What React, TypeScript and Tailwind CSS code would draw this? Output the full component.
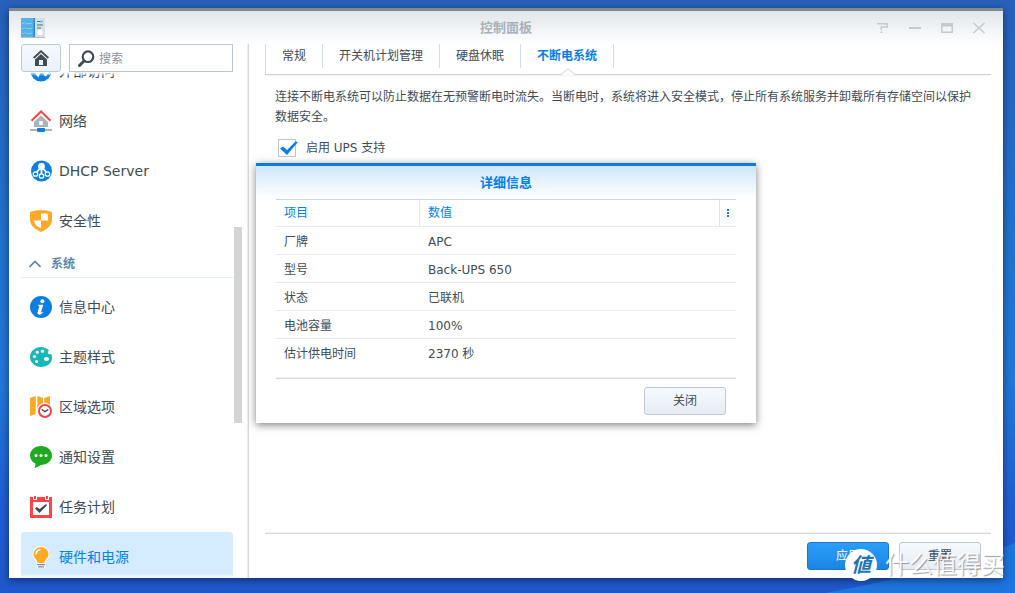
import type { ReactNode } from "react";
import clsx from "clsx";

const tabs = ["常规", "开关机计划管理", "硬盘休眠", "不断电系统"];

const details = [
  { label: "厂牌", value: "APC" },
  { label: "型号", value: "Back-UPS 650" },
  { label: "状态", value: "已联机" },
  { label: "电池容量", value: "100%" },
  { label: "估计供电时间", value: "2370 秒" },
];

function Icon({ children }: { children: ReactNode }) {
  return (
    <svg viewBox="0 0 22 22" className="h-[22px] w-[22px] shrink-0" aria-hidden="true">
      {children}
    </svg>
  );
}

const GlobeIcon = () => (
  <Icon>
    <circle cx="11" cy="11" r="10.5" fill="#0c7fe0" />
    <path d="M2 6l5-3 4 2v6l-1 3-1.500 3.500L6 15l-1-2.500-3-2zM13 11l4-5 3 3-.5 6-1.500-1.500-2 3-2-1z" fill="#fff" />
  </Icon>
);

const NetworkIcon = () => (
  <Icon>
    <path d="M11 5.2L4 12v5h14v-5z" fill="#a9b4bf" />
    <path d="M9.2 11h3.6v4H9.2z" fill="#fff" />
    <path d="M1.500 10.800L11 1.500l9.500 9.300" fill="none" stroke="#fa4646" strokeWidth="2" />
    <path d="M0 19h22v2H0z" fill="#a9b4bf" />
    <rect x="7" y="18" width="8" height="4" rx="1" fill="#0c7fe0" />
  </Icon>
);

const DhcpIcon = () => (
  <Icon>
    <circle cx="11.500" cy="11" r="10.500" fill="#0c7fe0" />
    <circle cx="11.500" cy="6.500" r="3.400" fill="#fff" />
    <path d="M10 8.500L6 13M11.500 9v5.500M13 8.500L17 13" stroke="#fff" strokeWidth="1.800" />
    <g fill="#0c7fe0" stroke="#fff" strokeWidth="1.300">
      <circle cx="5.500" cy="14" r="2.200" />
      <circle cx="11.500" cy="16" r="2.200" />
      <circle cx="17.500" cy="14" r="2.200" />
    </g>
  </Icon>
);

const ShieldIcon = () => (
  <Icon>
    <path d="M0 2Q11-2 22 2v8c0 6-6 9.500-11 12C6 19.500 0 16 0 10z" fill="#ffa928" />
    <path d="M11 3.500h5.500q1.500 0 1.500 1.500v5.500h-7zM4 10.500h7V18c-4-1.500-7-4-7-7.500z" fill="#fff" />
  </Icon>
);

const InfoIcon = () => (
  <Icon>
    <circle cx="11" cy="11" r="11" fill="#0c7fe0" />
    <circle cx="12.400" cy="5.200" r="2" fill="#fff" />
    <path
      d="M8.200 8.700h5l-2.100 7.200c-.2.900.5.900 1.700-.2l.5.600c-1.600 2-3 2.600-4.300 2.400-1.500-.2-1.700-1.200-1.400-2.400l1.700-6.300-1.400-.4z"
      fill="#fff"
    />
  </Icon>
);

const PaletteIcon = () => (
  <Icon>
    <path
      d="M11 1C5 1 0 5.400 0 11s5 10 11 10 11-3.500 11-9.500c0-1-.2-2.500-.7-3.500-2 .8-4-.2-3.300-2 .3-.8 1-1.500 1-1.500C17 2.300 14 1 11 1z"
      fill="#17b8b8"
    />
    <g fill="#fff">
      <circle cx="12.500" cy="5.200" r="1.600" />
      <circle cx="7.300" cy="6.200" r="1.600" />
      <circle cx="4.500" cy="10.500" r="1.600" />
      <circle cx="6.500" cy="15.500" r="1.600" />
      <ellipse cx="16.500" cy="13" rx="2.600" ry="2.100" />
    </g>
  </Icon>
);

const RegionIcon = () => (
  <Icon>
    <path d="M0 2l5.700-2v18L0 20zM7.300 0L13 2v16l-5.700-1zM14.300 2L20 0v12h-5.700z" fill="#ffa928" />
    <circle cx="15" cy="15" r="8" fill="#fff" />
    <circle cx="15" cy="15" r="6" fill="#fff" stroke="#f5424a" strokeWidth="2" />
    <path d="M11.700 13.500l3.300 2.200 3.300-2.200" fill="none" stroke="#414b55" strokeWidth="1.500" />
  </Icon>
);

const NotificationIcon = () => (
  <Icon>
    <path
      d="M11 0C5 0 0 4 0 9.500c0 3.600 2.200 6.600 5.500 8.200 0 1.500-.3 3-1 4.300 2.500-.6 4.500-1.600 6-3 6.500 0 11.500-4 11.500-9.500S17 0 11 0z"
      fill="#1faa1f"
    />
    <circle cx="6" cy="9.500" r="1.500" fill="#fff" />
    <circle cx="11" cy="9.500" r="1.500" fill="#fff" />
    <circle cx="16" cy="9.500" r="1.500" fill="#fff" />
  </Icon>
);

const TaskIcon = () => (
  <Icon>
    <path d="M0 1h22v21H0z" fill="#fa4646" />
    <path d="M3 6h16v13H3z" fill="#fff" />
    <path d="M3 0h4v4H3zM15 0h4v4h-4z" fill="#fff" />
    <path d="M4 0h2v3H4zM16 0h2v3h-2z" fill="#fa4646" />
    <path d="M5 12.500l1.700-1.500 3 2L16 8l1 1.200L9.500 17z" fill="#414b55" />
  </Icon>
);

const BulbIcon = () => (
  <Icon>
    <path
      d="M11 0a8.500 8.500 0 0 0-8.500 8.500c0 3.500 3 5.300 4.200 7.500v5q0 1 1 1h6.600q1 0 1-1v-5c1.200-2.200 4.200-4 4.200-7.500A8.500 8.500 0 0 0 11 0z"
      fill="#fff"
    />
    <path
      d="M11 1a7.500 7.500 0 0 0-7.500 7.500c0 3.500 3.500 4.500 4.200 8.500h6.600c.7-4 4.200-5 4.200-8.500A7.500 7.500 0 0 0 11 1z"
      fill="#ffa928"
    />
    <path d="M6 8.500Q6.200 4.200 10.500 3.500" fill="none" stroke="#fff" strokeWidth="1.600" />
    <path d="M7 18h8v1.200H7zM8 20.300h6v1.200H8z" fill="#7d8891" />
  </Icon>
);

const connectivity = [
  { label: "外部访问", icon: GlobeIcon },
  { label: "网络", icon: NetworkIcon },
  { label: "DHCP Server", icon: DhcpIcon },
  { label: "安全性", icon: ShieldIcon },
];

const system = [
  { label: "信息中心", icon: InfoIcon },
  { label: "主题样式", icon: PaletteIcon },
  { label: "区域选项", icon: RegionIcon },
  { label: "通知设置", icon: NotificationIcon },
  { label: "任务计划", icon: TaskIcon },
  { label: "硬件和电源", icon: BulbIcon, active: true },
];

type NavItem = { label: string; icon: () => ReactNode; active?: boolean };

function NavRow({ label, icon: ItemIcon, active }: NavItem) {
  return (
    <li>
      <a
        href="#"
        className={clsx(
          "flex h-[50px] items-center gap-[7px] rounded-sm pl-[9px] text-sm",
          active ? "bg-[#d5ebff] text-[#057feb]" : "text-[#414b55]"
        )}
      >
        <ItemIcon />
        <span>{label}</span>
      </a>
    </li>
  );
}

function Button({ children, primary }: { children: ReactNode; primary?: boolean }) {
  return (
    <button
      type="button"
      className={clsx(
        "h-7 w-[82px] rounded-[3px] border text-xs",
        primary
          ? "border-[#1a78c8] bg-linear-to-b from-[#2c9dfa] to-[#1b86e4] text-white"
          : "border-[#bcc8d4] bg-linear-to-b from-[#f5faff] to-[#e6ecf2] text-[#414b55]"
      )}
    >
      {children}
    </button>
  );
}

function TitleBar() {
  return (
    <header className="grid h-[33px] shrink-0 grid-cols-[1fr_auto_1fr] items-center bg-linear-to-b from-[#e1e6eb] to-white">
      <svg viewBox="0 0 24 20" className="ml-3 h-5 w-6" aria-hidden="true">
        <path d="M0 18h24v2H0z" fill="#b7bec4" />
        <path d="M0 0h14v19H0z" fill="#56b1e8" />
        <path d="M12.500 0H14v19h-1.500z" fill="#2f86d2" />
        <path d="M14 0h10v19H14z" fill="#d9dfe4" />
        <path d="M1 5l1 1 2-2M5 5.500h6M1 10l1 1 2-2M5 10.500h6M1 15l1 1 2-2M5 15.500h6" fill="none" stroke="#82cbf2" />
        <path d="M16 3.500h6M16 7h6M16 10h4" stroke="#5d6b78" strokeWidth="1.200" />
        <path d="M19 3.500h3M16 7h3" stroke="#3fc6e8" strokeWidth="1.500" />
        <path d="M16 10h3" stroke="#74d24a" strokeWidth="1.500" />
        <circle cx="19" cy="14.500" r="2.700" fill="#fff" />
      </svg>
      <h1 className="text-[13px] font-bold text-[#a9b2bb]">控制面板</h1>
      <div className="mr-2 flex justify-end">
        <button type="button" aria-label="帮助" className="flex h-6 w-8 items-center justify-center">
          <svg viewBox="0 0 12 12" className="h-3 w-3" fill="none" stroke="#c5cace" strokeWidth="1.500">
            <path d="M0 1.700h10.300v3.200H4.300v3M3.500 10.300h2" />
          </svg>
        </button>
        <button type="button" aria-label="最小化" className="flex h-6 w-8 items-center justify-center">
          <svg viewBox="0 0 12 12" className="h-3 w-3">
            <path d="M0 5h12v2H0z" fill="#c5cace" />
          </svg>
        </button>
        <button type="button" aria-label="最大化" className="flex h-6 w-8 items-center justify-center">
          <svg viewBox="0 0 12 12" className="h-3 w-3">
            <path d="M0 1h12v10H0zM1.500 4.500v5h9v-5z" fill="#c5cace" fillRule="evenodd" />
          </svg>
        </button>
        <button type="button" aria-label="关闭窗口" className="flex h-6 w-8 items-center justify-center">
          <svg viewBox="0 0 12 12" className="h-3 w-3" stroke="#c5cace" strokeWidth="1.500">
            <path d="M.5 1l11 10M11.500 1L.5 11" />
          </svg>
        </button>
      </div>
    </header>
  );
}

function Sidebar() {
  return (
    <aside className="flex w-60 shrink-0 flex-col border-r border-[#d6d8da] pl-3 shadow-[inset_-2px_0_1px_-1px_rgba(0,0,0,0.08)]">
      <div className="flex shrink-0 gap-2 pr-[15px]">
        <button
          type="button"
          aria-label="主页"
          className="flex h-7 w-10 items-center justify-center rounded-[3px] border border-[#bcc8d4] bg-linear-to-b from-[#f5faff] to-[#ebf1f7]"
        >
          <svg viewBox="0 0 16 16" className="h-4 w-4" fill="#414b55">
            <path d="M8 0l8 7.300-1.300 1.400L8 2.600 1.300 8.700 0 7.300z" />
            <path d="M8 4l6 5.500V16H2V9.500zM6 10v5h4v-5z" fillRule="evenodd" />
          </svg>
        </button>
        <label className="flex h-7 min-w-0 flex-1 items-center gap-1 border border-[#b9c6d2] pl-2">
          <svg viewBox="0 0 17 17" className="h-[17px] w-[17px] shrink-0" fill="none" stroke="#414b55">
            <circle cx="10" cy="6.700" r="5.300" strokeWidth="2.200" />
            <path d="M6 11l-4.500 4.500" strokeWidth="3" strokeLinecap="round" />
          </svg>
          <input
            type="text"
            aria-label="搜索"
            placeholder="搜索"
            className="w-full min-w-0 pt-0.5 text-xs outline-none placeholder:text-[#8a949e]"
          />
        </label>
      </div>
      <div className="flex min-h-0 flex-1 gap-px">
        <nav className="relative min-w-0 flex-1 overflow-hidden">
          <div className="-mt-[26px]">
            <ul>
              {connectivity.map((item) => (
                <NavRow key={item.label} {...item} />
              ))}
            </ul>
            <button
              type="button"
              className="mb-1 flex h-8 w-full items-center gap-[10px] border-b border-[#e1eaf3] pt-1 pl-2 text-xs font-bold text-[#5a87a8]"
            >
              <svg viewBox="0 0 12 8" className="h-2 w-3" fill="none" stroke="#5a87a8" strokeWidth="1.600">
                <path d="M.5 7L6 1.500 11.500 7" />
              </svg>
              系统
            </button>
            <ul>
              {system.map((item) => (
                <NavRow key={item.label} {...item} />
              ))}
            </ul>
          </div>
          <div className="absolute inset-x-0 top-0 h-1 bg-linear-to-b from-white to-transparent" />
          <div className="absolute inset-x-0 bottom-0 h-1 bg-linear-to-t from-white to-transparent" />
        </nav>
        <div className="mr-[6px] w-2 shrink-0 pt-[155px]">
          <div className="h-[196px] bg-[#d3d4d6]" />
        </div>
      </div>
    </aside>
  );
}

function Tabs() {
  return (
    <nav className="border-b border-[#cfd1d3] shadow-[0_2px_2px_-1px_rgba(0,0,0,0.06)]">
      <ul className="flex border-l border-[#d3dde6]">
        {tabs.map((tab) => {
          const active = tab === "不断电系统";
          return (
            <li key={tab} className="relative pb-[6px]">
              <a
                href="#"
                className={clsx(
                  "block h-6 border-r border-[#d3dde6] px-4 text-xs leading-6",
                  active ? "font-bold text-[#057feb]" : "text-[#414b55]"
                )}
              >
                {tab}
              </a>
              {active && (
                <svg viewBox="0 0 14 8" className="absolute -bottom-px left-1/2 h-2 w-[14px] -translate-x-1/2">
                  <path d="M0 8l7-6.500L14 8z" fill="#fff" />
                  <path d="M.5 7.500L7 1.500l6.500 6" fill="none" stroke="#cfd1d3" />
                </svg>
              )}
            </li>
          );
        })}
      </ul>
    </nav>
  );
}

function UpsPanel() {
  return (
    <main className="flex min-w-0 flex-1 flex-col pr-3 pl-4">
      <Tabs />
      <div className="flex-1 px-[10px] pt-3 text-xs leading-5 text-[#414b55]">
        <p>
          连接不断电系统可以防止数据在无预警断电时流失。当断电时，系统将进入安全模式，停止所有系统服务并卸载所有存储空间以保护数据安全。
        </p>
        <label className="mt-3 ml-[3px] flex h-[18px] items-center gap-[10px]">
          <span className="relative h-[18px] w-[18px]">
            <input
              type="checkbox"
              defaultChecked
              className="peer block h-[18px] w-[18px] appearance-none border border-[#b9c6d2] bg-white"
            />
            <svg
              viewBox="0 0 20 18"
              className="pointer-events-none absolute top-0 left-0 hidden h-[18px] w-5 peer-checked:block"
            >
              <path d="M2 9.500L5 7.500l4 3.500L17.500 2.500 20 3 9 16z" fill="#0c7fe6" />
            </svg>
          </span>
          启用 UPS 支持
        </label>
      </div>
      <footer className="flex justify-end gap-[10px] border-t border-[#d6d8da] pt-2 pr-[10px] pb-2 shadow-[0_-1px_0_#f2f2f2]">
        <Button primary>应用</Button>
        <Button>重置</Button>
      </footer>
    </main>
  );
}

function DetailsDialog() {
  return (
    <section
      role="dialog"
      aria-labelledby="details-title"
      className="w-[500px] border-t-[3px] border-[#0a7be0] bg-white px-5 shadow-[0_2px_8px_rgba(0,0,0,0.5)]"
    >
      <h2
        id="details-title"
        className="-mx-5 h-[33px] bg-linear-to-b from-[#d0e8fa] to-white text-center text-[13px] leading-[34px] font-bold text-[#057feb]"
      >
        详细信息
      </h2>
      <table className="w-full table-fixed border-separate border-spacing-0 text-left text-xs text-[#414b55]">
        <colgroup>
          <col className="w-36" />
          <col />
          <col className="w-4" />
        </colgroup>
        <thead>
          <tr className="h-7 text-[#057feb]">
            <th className="border-y border-r border-t-[#c8d7e5] border-r-[#dde6ee] border-b-[#e6ebf0] p-0 pl-2 font-normal">
              项目
            </th>
            <th className="border-y border-r border-t-[#c8d7e5] border-r-[#dde6ee] border-b-[#e6ebf0] p-0 pl-2 font-normal">
              数值
            </th>
            <th className="border-y border-t-[#c8d7e5] border-b-[#e6ebf0] p-0">
              <button type="button" aria-label="列" className="flex w-full justify-center">
                <svg viewBox="0 0 2 8" className="h-2 w-[2px]" fill="#057feb">
                  <path d="M0 0h2v2H0zM0 3h2v2H0zM0 6h2v2H0z" />
                </svg>
              </button>
            </th>
          </tr>
        </thead>
        <tbody>
          {details.map((row, index) => {
            const line = index < details.length - 1 && "border-b border-[#e6ebf2]";
            return (
              <tr key={row.label} className="h-7">
                <td className={clsx("p-0 pt-0.5 pl-2", line)}>{row.label}</td>
                <td colSpan={2} className={clsx("p-0 pt-0.5 pl-2", line)}>
                  {row.value}
                </td>
              </tr>
            );
          })}
        </tbody>
      </table>
      <div className="mt-[11px] flex justify-end border-t border-[#d6d8da] pt-2 pr-[10px] pb-2 shadow-[0_-1px_0_#f2f2f2]">
        <Button>关闭</Button>
      </div>
    </section>
  );
}

function Watermark() {
  return (
    <div className="pointer-events-none absolute right-[10px] bottom-3 flex h-8 items-center gap-2">
      <span className="flex h-8 w-8 items-center justify-center rounded-full bg-white text-xl font-bold text-[#1f74b8] italic">
        値
      </span>
      <span className="text-2xl text-white/90 [text-shadow:1px_1px_1px_rgba(90,95,105,0.6)]">什么值得买</span>
    </div>
  );
}

export default function App() {
  return (
    <div
      lang="zh-CN"
      className="relative flex h-screen flex-col overflow-hidden bg-[#2160d3] bg-[linear-gradient(180deg,#2860bb_0%,#2272cf_40%,#2277da_65%,#215dd3_85%,#1f58cc_100%)] pt-2 pr-3 pb-[15px] pl-[9px] font-['DejaVu_Sans','Noto_Sans_CJK_SC',sans-serif]"
    >
      <svg
        viewBox="0 0 300 60"
        preserveAspectRatio="none"
        className="absolute right-0 bottom-0 h-[60px] w-[300px]"
        aria-hidden="true"
      >
        <path d="M110 60Q230 38 300 10v50z" fill="#1f74e0" />
      </svg>
      <div className="relative flex min-h-0 flex-1 flex-col border-t-[3px] border-[#808890] bg-white shadow-[0_2px_8px_rgba(0,0,0,0.5)]">
        <TitleBar />
        <div className="flex min-h-0 flex-1">
          <Sidebar />
          <UpsPanel />
        </div>
        <div className="absolute inset-x-0 -top-[3px] bottom-0 flex items-center justify-center">
          <DetailsDialog />
        </div>
      </div>
      <Watermark />
    </div>
  );
}
